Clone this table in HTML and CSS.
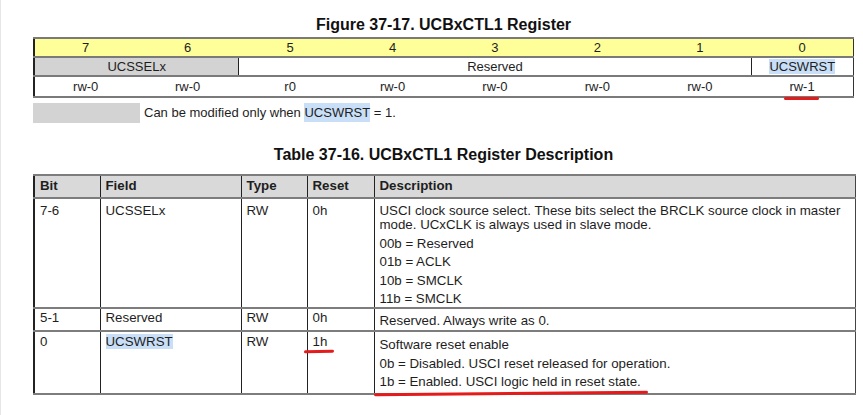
FILE: index.html
```html
<!DOCTYPE html>
<html>
<head>
<meta charset="utf-8">
<link rel="stylesheet" href="styles.css">
</head>
<body>
<div class="page">
  <h2 class="fig-title">Figure 37-17. UCBxCTL1 Register</h2>
  <table class="reg">
    <colgroup>
      <col class="rc"><col class="rc"><col class="rc"><col class="rc"><col class="rc"><col class="rc"><col class="rc"><col class="rc">
    </colgroup>
    <tr class="bits">
      <td>7</td><td>6</td><td>5</td><td>4</td><td>3</td><td>2</td><td>1</td><td class="last">0</td>
    </tr>
    <tr class="names">
      <td colspan="2" class="shaded">UCSSELx</td>
      <td colspan="5">Reserved</td>
      <td class="last"><span class="hl">UCSWRST</span></td>
    </tr>
    <tr class="access">
      <td>rw-0</td><td>rw-0</td><td>r0</td><td>rw-0</td><td>rw-0</td><td>rw-0</td><td>rw-0</td><td class="last"><span class="mark mark-rw">rw-1</span></td>
    </tr>
  </table>
  <div class="legend">
    <span class="swatch"></span>
    <span class="legend-text">Can be modified only when <span class="hl">UCSWRST</span> = 1.</span>
  </div>
  <h2 class="tbl-title">Table 37-16. UCBxCTL1 Register Description</h2>
  <table class="desc">
    <colgroup>
      <col class="c-bit"><col class="c-field"><col class="c-type"><col class="c-reset"><col class="c-desc">
    </colgroup>
    <thead>
      <tr><th>Bit</th><th>Field</th><th>Type</th><th>Reset</th><th class="last">Description</th></tr>
    </thead>
    <tbody>
      <tr class="r1">
        <td>7-6</td><td>UCSSELx</td><td>RW</td><td>0h</td>
        <td class="d last">
          <p>USCI clock source select. These bits select the BRCLK source clock in master mode. UCxCLK is always used in slave mode.</p>
          <p>00b = Reserved</p>
          <p>01b = ACLK</p>
          <p>10b = SMCLK</p>
          <p>11b = SMCLK</p>
        </td>
      </tr>
      <tr class="r2">
        <td>5-1</td><td>Reserved</td><td>RW</td><td>0h</td>
        <td class="d last"><p>Reserved. Always write as 0.</p></td>
      </tr>
      <tr class="r3">
        <td>0</td><td><span class="hl">UCSWRST</span></td><td>RW</td><td><span class="mark mark-1h">1h</span></td>
        <td class="d last">
          <p>Software reset enable</p>
          <p>0b = Disabled. USCI reset released for operation.</p>
          <p><span class="mark mark-line">1b = Enabled. USCI logic held in reset state.</span></p>
        </td>
      </tr>
    </tbody>
  </table>
</div>
</body>
</html>
```

FILE: styles.css
```css
html, body {
  margin: 0;
  padding: 0;
  background: #ffffff;
}
body {
  font-family: "Liberation Sans", Arial, sans-serif;
  color: #1e1e1e;
  width: 863px;
  height: 415px;
  overflow: hidden;
  border-left: 1px solid #e6e6e6;
  box-sizing: border-box;
}
.page {
  padding: 16px 0 0 32px;
  width: 821px;
}
.fig-title {
  margin: 0;
  height: 21px;
  font-size: 16px;
  font-weight: bold;
  line-height: 18px;
  text-align: center;
  color: #111;
}
.tbl-title {
  margin: 23px 0 0 0;
  height: 28px;
  font-size: 16px;
  font-weight: bold;
  line-height: 18px;
  text-align: center;
  color: #111;
}

/* register figure */
.reg {
  width: 821px;
  table-layout: fixed;
  border-collapse: collapse;
  font-size: 13px;
  border-left: 2px solid #222;
  border-right: 1px solid #333;
}
.reg td {
  text-align: center;
  padding: 0;
  line-height: 16px;
}
.reg .bits td {
  background: #ffff99;
  height: 17px;
  border-top: 2px solid #7a7a7a;
  border-bottom: 2px solid #7a7a7a;
}
.reg .names td {
  height: 17px;
  border-bottom: 2px solid #7a7a7a;
}
.reg .names td.shaded {
  background: #d3d3d3;
  border-right: 1px solid #222;
}
.reg .names td.last {
  border-left: 1px solid #222;
}
.reg .access td {
  height: 19px;
  border-bottom: 2px solid #7a7a7a;
}

.hl {
  background: #c9def7;
}

.legend {
  display: flex;
  align-items: center;
  gap: 4px;
  margin-top: 4px;
  height: 21px;
}
.swatch {
  width: 107px;
  height: 20px;
  background: #d3d3d3;
}
.legend-text {
  font-size: 13px;
  line-height: 19px;
}
.legend-text .hl {
  display: inline-block;
  line-height: 19px;
}

/* description table */
.desc {
  width: 821px;
  table-layout: fixed;
  border-collapse: collapse;
  font-size: 13.3px;
}
.c-bit { width: 66px; }
.c-field { width: 141px; }
.c-type { width: 66px; }
.c-reset { width: 67px; }
.c-desc { width: 481px; }
.desc th, .desc td {
  border-left: 1px solid #222;
  border-top: 2px solid #7d7d7d;
  border-bottom: 2px solid #7d7d7d;
  text-align: left;
  vertical-align: top;
  padding: 2px 5px 2px 5px;
  line-height: 14px;
}
.desc th.last, .desc td.last {
  border-right: 1px solid #444;
}
.desc tr th:first-child, .desc tr td:first-child {
  border-left: 2px solid #222;
}
.desc th {
  background: #d9d9d9;
  font-weight: bold;
  padding-top: 3px;
  padding-bottom: 4px;
}
.desc td p {
  margin: 0 0 4.5px 0;
}
.desc td p:last-child {
  margin-bottom: 0;
}
.desc .r1 td {
  padding-top: 5px;
  padding-bottom: 1px;
}
.desc .r2 td {
  padding-top: 2px;
  padding-bottom: 5px;
}
.desc .r2 td.d {
  padding-top: 5px;
  padding-bottom: 2px;
}
.desc .r3 td {
  padding-top: 3px;
}
.desc .r3 td.d {
  padding-top: 6px;
  padding-bottom: 4px;
}

/* red annotations */
.mark {
  position: relative;
}
.mark::after {
  content: "";
  position: absolute;
  background: #e41b1b;
  height: 3px;
  border-radius: 2px;
}
.mark-rw::after {
  left: -5px;
  right: -4px;
  bottom: -6px;
}
.mark-1h::after {
  left: -9px;
  right: -6px;
  bottom: -4px;
  transform: rotate(-1.5deg);
}
.mark-line::after {
  left: -6px;
  right: -7px;
  bottom: -6px;
  transform: rotate(-0.5deg);
}
```
